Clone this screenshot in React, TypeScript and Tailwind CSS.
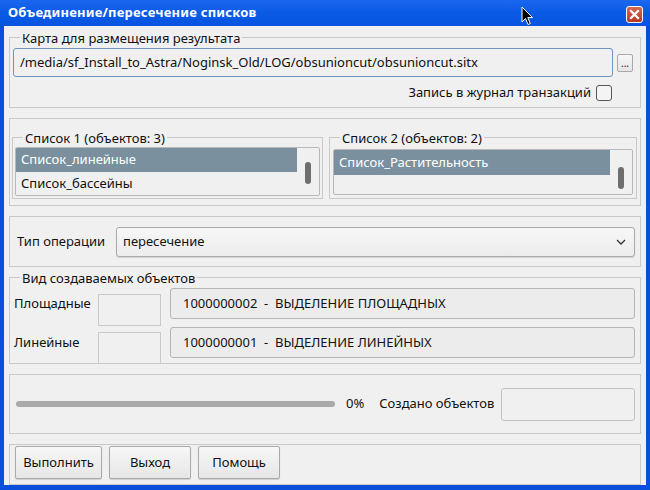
import React from 'react';

const font = { fontFamily: '"Noto Sans", "DejaVu Sans", sans-serif' };

const Frame: React.FC<{ legend?: string; className?: string; children?: React.ReactNode }> = ({ legend, className, children }) => (
  <div className={`relative border border-[#c9c9c9] ${className ?? ''}`}>
    {legend && (
      <span className="absolute left-[10px] top-[-9px] bg-[#f0f0f0] px-[2px] leading-[18px] text-[13px] text-[#111]">
        {legend}
      </span>
    )}
    {children}
  </div>
);

const Button: React.FC<{ label: string; w: string }> = ({ label, w }) => (
  <div
    className={`${w} h-[33px] flex items-center justify-center rounded-[2px] border border-[#a9a9a9] bg-gradient-to-b from-[#f7f7f7] to-[#e6e6e6] shadow-[0_1px_1px_rgba(0,0,0,0.15)] text-[13px] text-[#111]`}
  >
    {label}
  </div>
);

const ListBox: React.FC<{ items: string[]; className?: string; handleTop: string }> = ({ items, className, handleTop }) => (
  <div className={`relative flex flex-col border border-[#b8b8b8] rounded-[2px] bg-[#f0f0f0] overflow-hidden ${className ?? ''}`}>
    {items.map((it, i) => (
      <div
        key={it}
        className={`h-[25px] flex items-center pl-[5px] text-[13px] mr-[22px] ${i === 0 ? 'bg-[#7b909e] text-white' : 'text-[#111]'}`}
      >
        {it}
      </div>
    ))}
    <div className={`absolute right-[8px] ${handleTop} w-[6px] h-[22px] rounded-[3px] bg-[#6e6e6e]`} />
  </div>
);

export default function App() {
  return (
    <div className="w-[650px] h-[490px] flex flex-col bg-[#0a4fdc] overflow-hidden relative" style={font}>
      {/* Title bar */}
      <div className="h-[26px] shrink-0 flex items-center justify-between pl-[8px] pr-[7px] bg-gradient-to-b from-[#1a68f0] via-[#0a5ae6] to-[#0654e0]">
        <span className="text-white font-bold text-[13px] tracking-[0.2px]">Объединение/пересечение списков</span>
        <div className="w-[17px] h-[17px] mt-[2px] rounded-[3px] border border-white bg-gradient-to-b from-[#d8694f] to-[#b8371f] flex items-center justify-center">
          <svg width="11" height="11" viewBox="0 0 11 11">
            <path d="M2 2 L9 9 M9 2 L2 9" stroke="white" strokeWidth="2.2" strokeLinecap="square" />
          </svg>
        </div>
      </div>

      {/* cursor */}
      <svg className="absolute left-[521px] top-[6px]" width="13" height="20" viewBox="0 0 13 20">
        <path d="M1 1 L1 16 L4.5 12.5 L7 18.5 L9.3 17.5 L6.8 11.6 L11.5 11.6 Z" fill="black" stroke="white" strokeWidth="1" />
      </svg>

      {/* Body */}
      <div className="flex-1 mx-[4px] mb-[5px] bg-[#f0f0f0] px-[5px] pt-[11px] flex flex-col gap-[10px]">
        {/* Map group */}
        <Frame legend="Карта для размещения результата" className="h-[71px] px-[3px] pt-[10px]">
          <div className="flex items-center">
            <div className="w-[600px] h-[29px] rounded-[3px] border border-[#6f93ba] bg-[#f0f0f0] flex items-center pl-[6px] text-[13px] text-[#111]">
              /media/sf_Install_to_Astra/Noginsk_Old/LOG/obsunioncut/obsunioncut.sitx
            </div>
            <div className="ml-[4px] w-[16px] h-[18px] rounded-[2px] border border-[#a9a9a9] bg-gradient-to-b from-[#f7f7f7] to-[#e6e6e6] flex items-end justify-center pb-[3px] text-[10px] leading-none text-[#111]">
              ...
            </div>
          </div>
          <div className="flex items-center justify-end gap-[5px] mt-[6px] pr-[25px]">
            <span className="text-[13px] text-[#111]">Запись в журнал транзакций</span>
            <div className="w-[16px] h-[16px] rounded-[3px] border border-[#555] bg-[#f4f4f4]" />
          </div>
        </Frame>

        {/* Lists */}
        <Frame className="h-[88px] px-[2px] pt-[18px] flex gap-[6px]">
          <Frame legend="Список 1 (объектов: 3)" className="w-[311px] h-[62px] px-[2px] pt-[9px]">
            <ListBox items={['Список_линейные', 'Список_бассейны']} className="h-[49px]" handleTop="top-[14px]" />
          </Frame>
          <Frame legend="Список 2 (объектов: 2)" className="w-[308px] h-[62px] px-[3px] pt-[11px]">
            <ListBox items={['Список_Растительность']} className="h-[46px]" handleTop="top-[17px]" />
          </Frame>
        </Frame>

        {/* Operation type */}
        <Frame className="h-[51px] flex items-center pl-[7px] pr-[5px]">
          <span className="text-[13px] text-[#111] w-[99px]">Тип операции</span>
          <div className="flex-1 h-[30px] rounded-[3px] border border-[#a9a9a9] bg-gradient-to-b from-[#f7f7f7] to-[#ececec] shadow-[0_1px_1px_rgba(0,0,0,0.12)] flex items-center justify-between pl-[6px] pr-[8px] text-[13px] text-[#111]">
            <span>пересечение</span>
            <svg width="10" height="6" viewBox="0 0 10 6">
              <path d="M1 1 L5 5 L9 1" fill="none" stroke="#333" strokeWidth="1.3" />
            </svg>
          </div>
        </Frame>

        {/* Object kinds */}
        <Frame legend="Вид создаваемых объектов" className="h-[87px] pl-[4px] pr-[5px] flex">
          <div className="w-[84px] pt-[10px] flex flex-col gap-[8px]">
            <div className="h-[31px] flex items-center text-[13px] text-[#111]">Площадные</div>
            <div className="h-[31px] flex items-center text-[13px] text-[#111]">Линейные</div>
          </div>
          <div className="pt-[16px] flex flex-col gap-[6px]">
            <div className="w-[63px] h-[32px] border border-[#c9c9c9]" />
            <div className="w-[63px] h-[31px] border border-[#c9c9c9] border-b-0" />
          </div>
          <div className="flex-1 ml-[9px] pt-[10px] flex flex-col gap-[8px]">
            <div className="h-[31px] rounded-[3px] border border-[#b5b5b5] bg-[#ececec] flex items-center pl-[12px] text-[13px] text-[#111]">
              1000000002&nbsp;&nbsp;-&nbsp;&nbsp;ВЫДЕЛЕНИЕ ПЛОЩАДНЫХ
            </div>
            <div className="h-[31px] rounded-[3px] border border-[#b5b5b5] bg-[#ececec] flex items-center pl-[12px] text-[13px] text-[#111]">
              1000000001&nbsp;&nbsp;-&nbsp;&nbsp;ВЫДЕЛЕНИЕ ЛИНЕЙНЫХ
            </div>
          </div>
        </Frame>

        {/* Progress */}
        <Frame className="h-[60px] flex items-center pl-[6px] pr-[5px]">
          <div className="w-[319px] h-[6px] rounded-[3px] bg-[#a9a9a9]" />
          <span className="ml-[11px] text-[13px] text-[#111]">0%</span>
          <span className="ml-[15px] text-[13px] text-[#111]">Создано объектов</span>
          <div className="ml-auto w-[134px] h-[33px] rounded-[3px] border border-[#c2c2c2] bg-[#f0f0f0]" />
        </Frame>

        {/* Buttons */}
        <Frame className="h-[41px] flex items-start pl-[5px] gap-[7px] pt-[1px]">
          <Button label="Выполнить" w="w-[87px]" />
          <Button label="Выход" w="w-[82px]" />
          <Button label="Помощь" w="w-[82px]" />
        </Frame>
      </div>
    </div>
  );
}
